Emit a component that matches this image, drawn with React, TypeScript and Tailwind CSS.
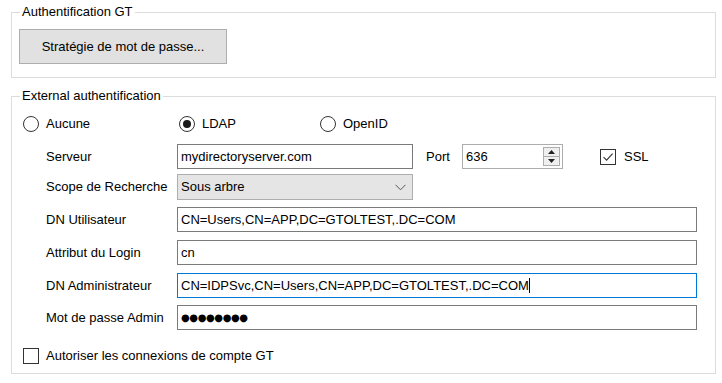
import React from "react";

function Radio({checked, label, width}: {checked?: boolean; label: string; width: string}) {
    return (
        <div className={`flex items-center ${width}`}>
            <span className="flex items-center justify-center w-[16px] h-[16px] rounded-full border border-[#333333] bg-white">
                {checked && <span className="w-[8px] h-[8px] rounded-full bg-[#1a1a1a]"/>}
            </span>
            <span className="ml-[7px]">{label}</span>
        </div>
    );
}

function Check({checked}: {checked?: boolean}) {
    return (
        <span className="flex items-center justify-center w-[16px] h-[16px] border border-[#333333] bg-white shrink-0">
            {checked && (
                <svg width="12" height="12" viewBox="0 0 12 12">
                    <path d="M1.5 6.2 L4.6 9.2 L10.6 2.6" fill="none" stroke="#333333" strokeWidth="1.1"/>
                </svg>
            )}
        </span>
    );
}

function Row({label, children, className = ""}: {label: string; children: React.ReactNode; className?: string}) {
    return (
        <div className={`flex items-center ${className}`}>
            <span className="w-[154px] shrink-0 pl-[23px] whitespace-nowrap">{label}</span>
            {children}
        </div>
    );
}

const inputCls = "flex items-center h-[25px] border border-[#7a7a7a] bg-white pl-[3px] whitespace-nowrap overflow-hidden";

export default function App() {
    return (
        <div className="w-[722px] h-[383px] bg-white text-black text-[13px] leading-[16px] pl-[11px] pt-[4px]"
             style={{fontFamily: '"Liberation Sans", Arial, sans-serif'}}>
            <fieldset className="w-[705px] border border-[#dcdcdc] pl-[7px] pb-[13px]">
                <legend className="ml-[1px] px-[2px]">Authentification GT</legend>
                <button className="mt-[9px] w-[208px] h-[35px] bg-[#e1e1e1] border border-[#adadad] flex items-center justify-center">
                    Stratégie de mot de passe...
                </button>
            </fieldset>

            <fieldset className="mt-[10px] w-[705px] border border-[#dcdcdc] pl-[11px] pb-[9px]">
                <legend className="ml-[-3px] px-[2px]">External authentification</legend>

                <div className="flex items-center h-[20px] mt-[10px]">
                    <Radio label="Aucune" width="w-[156px]"/>
                    <Radio label="LDAP" checked width="w-[141px]"/>
                    <Radio label="OpenID" width="w-[100px]"/>
                </div>

                <Row label="Serveur" className="mt-[10px]">
                    <div className={`${inputCls} w-[236px]`}>mydirectoryserver.com</div>
                    <span className="ml-[13px] w-[36px]">Port</span>
                    <div className="flex items-center justify-between w-[101px] h-[25px] border border-[#adadad] bg-white pl-[3px] pr-[2px]">
                        <span>636</span>
                        <div className="flex flex-col w-[17px] h-[19px] border border-[#adadad]">
                            <div className="flex-1 flex items-center justify-center bg-[#efefef] border-b border-[#adadad]">
                                <svg width="7" height="4" viewBox="0 0 7 4"><path d="M0 4 L3.5 0 L7 4 Z" fill="#222"/></svg>
                            </div>
                            <div className="flex-1 flex items-center justify-center bg-[#efefef]">
                                <svg width="7" height="4" viewBox="0 0 7 4"><path d="M0 0 L3.5 4 L7 0 Z" fill="#222"/></svg>
                            </div>
                        </div>
                    </div>
                    <div className="flex items-center ml-[37px]">
                        <Check checked/>
                        <span className="ml-[8px]">SSL</span>
                    </div>
                </Row>

                <Row label="Scope de Recherche" className="mt-[5px]">
                    <div className="flex items-center justify-between w-[236px] h-[26px] border border-[#adadad] bg-[#e5e5e5] pl-[3px] pr-[6px]">
                        <span>Sous arbre</span>
                        <svg width="11" height="7" viewBox="0 0 11 7">
                            <path d="M0.5 0.8 L5.5 5.8 L10.5 0.8" fill="none" stroke="#555" strokeWidth="1"/>
                        </svg>
                    </div>
                </Row>

                <Row label="DN Utilisateur" className="mt-[7px]">
                    <div className={`${inputCls} w-[520px]`}>CN=Users,CN=APP,DC=GTOLTEST,.DC=COM</div>
                </Row>

                <Row label="Attribut du Login" className="mt-[8px]">
                    <div className={`${inputCls} w-[520px]`}>cn</div>
                </Row>

                <Row label="DN Administrateur" className="mt-[8px]">
                    <div className={`${inputCls} w-[520px] border-[#0078d7]`}>
                        CN=IDPSvc,CN=Users,CN=APP,DC=GTOLTEST,.DC=COM
                        <span className="w-px h-[15px] bg-black"/>
                    </div>
                </Row>

                <Row label="Mot de passe Admin" className="mt-[7px]">
                    <div className={`${inputCls} w-[520px] text-[10px] tracking-[-0.4px]`}
                         style={{fontFamily: '"DejaVu Sans", sans-serif'}}>●●●●●●●●</div>
                </Row>

                <div className="flex items-center mt-[18px]">
                    <Check/>
                    <span className="ml-[7px]">Autoriser les connexions de compte GT</span>
                </div>
            </fieldset>
        </div>
    );
}
